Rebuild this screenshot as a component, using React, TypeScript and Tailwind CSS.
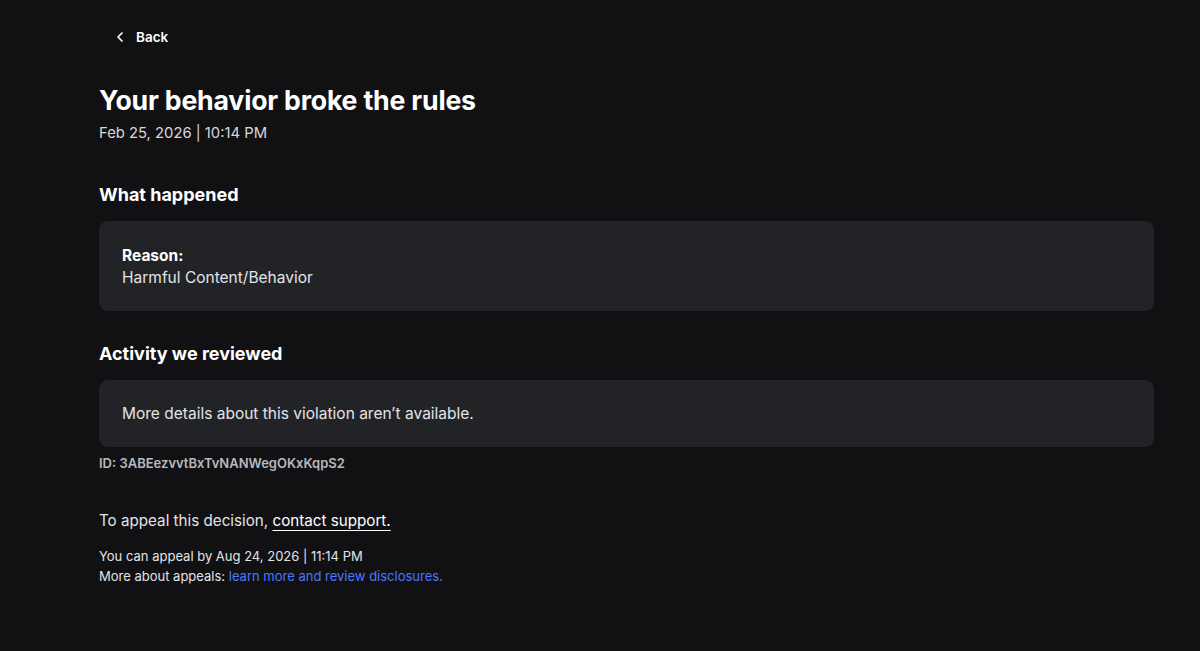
import { ChevronLeft } from 'lucide-react';

const App = () => {
  return (
    <div className="min-h-[651px] w-full bg-[#111114] text-white font-['Inter',sans-serif]">
      <div className="pl-[99px] pr-[46px] pt-[25px] pb-10">
        <button type="button" className="flex items-center gap-[8px] pl-[13px] h-[24px] text-[13.5px] font-semibold text-white">
          <ChevronLeft className="w-[16px] h-[16px]" strokeWidth={2.5} />
          Back
        </button>

        <h1 className="mt-[35px] text-[26.7px] leading-[32px] font-bold text-white tracking-[-0.2px]">
          Your behavior broke the rules
        </h1>
        <p className="mt-[7px] text-[14.8px] leading-[20px] text-[#d6d7db]">Feb 25, 2026 | 10:14 PM</p>

        <h2 className="mt-[40px] text-[18px] leading-[24px] font-bold">What happened</h2>
        <div className="mt-[14px] rounded-[9px] bg-[#222327] px-[23px] pt-[24px] h-[90px]">
          <p className="text-[15.5px] leading-[22px] font-bold">Reason:</p>
          <p className="text-[15.5px] leading-[22px] text-[#e2e3e7]">Harmful Content/Behavior</p>
        </div>

        <h2 className="mt-[31px] text-[18px] leading-[24px] font-bold">Activity we reviewed</h2>
        <div className="mt-[14px] rounded-[9px] bg-[#222327] px-[23px] h-[67px] flex items-center">
          <p className="text-[15.5px] leading-[22px] text-[#e2e3e7]">More details about this violation aren’t available.</p>
        </div>
        <p className="mt-[7px] text-[13px] leading-[18px] font-semibold text-[#b8b9bf]">ID: 3ABEezvvtBxTvNANWegOKxKqpS2</p>

        <p className="mt-[38px] text-[15.2px] leading-[22px] text-[#e2e3e7]">
          To appeal this decision,{' '}
          <a href="#" className="text-white underline underline-offset-[4px] decoration-1">contact support.</a>
        </p>
        <p className="mt-[14px] text-[13px] leading-[20px] text-[#e2e3e7]">You can appeal by Aug 24, 2026 | 11:14 PM</p>
        <p className="text-[13px] leading-[20px] text-[#e2e3e7]">
          More about appeals:{' '}
          <a href="#" className="text-[#4a78ff]">learn more and review disclosures.</a>
        </p>
      </div>
    </div>
  );
};

export default App;
